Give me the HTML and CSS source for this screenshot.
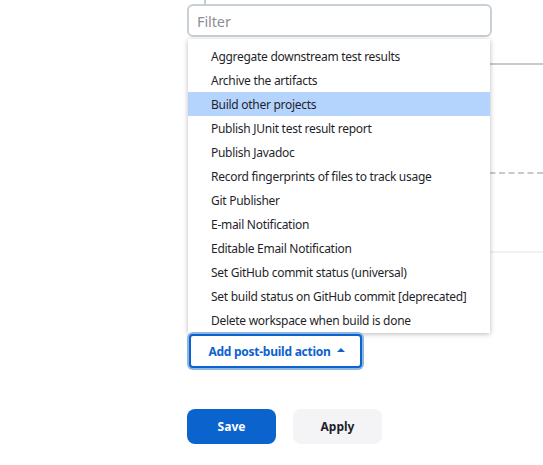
FILE: index.html
```html
<!DOCTYPE html>
<html>
<head>
<meta charset="utf-8">
<link rel="stylesheet" href="styles.css">
</head>
<body>
<div class="page">
  <div class="bg">
    <div class="vline"></div>
    <div class="hline solid" style="top:63px"></div>
    <div class="hline dashed" style="top:172px"></div>
    <div class="hline light" style="top:251px"></div>
  </div>
  <div class="col">
    <input class="filter" placeholder="Filter">
    <ul class="menu">
      <li>Aggregate downstream test results</li>
      <li>Archive the artifacts</li>
      <li class="active">Build other projects</li>
      <li>Publish JUnit test result report</li>
      <li>Publish Javadoc</li>
      <li>Record fingerprints of files to track usage</li>
      <li>Git Publisher</li>
      <li>E-mail Notification</li>
      <li>Editable Email Notification</li>
      <li>Set GitHub commit status (universal)</li>
      <li>Set build status on GitHub commit [deprecated]</li>
      <li>Delete workspace when build is done</li>
    </ul>
    <div class="addrow">
      <button class="add">Add post-build action <span class="caret"></span></button>
    </div>
    <div class="actions">
      <button class="save">Save</button>
      <button class="apply">Apply</button>
    </div>
  </div>
</div>
</body>
</html>
```
FILE: styles.css
```css
html, body { margin: 0; padding: 0; background: #fff; }
body { font-family: "Noto Sans", "Open Sans", sans-serif; color: #1f1f2b; }
.page { position: relative; width: 543px; height: 465px; overflow: hidden; }
.bg { position: absolute; inset: 0; }
.vline { position: absolute; left: 204px; top: 0; width: 2px; height: 6px; background: #c3ccd1; }
.hline { position: absolute; left: 480px; right: 0; }
.hline.solid { height: 2px; background: #c3cbd0; }
.hline.dashed { border-top: 2px dashed #c3cbd0; }
.hline.light { height: 2px; background: #f1f1f6; }
.col { position: relative; margin-left: 187px; width: 305px; padding-top: 4px; display: flex; flex-direction: column; }
.filter { box-sizing: border-box; width: 305px; height: 33px; border: 2px solid #c8d0d5; border-radius: 6px; padding: 0 8px; font-family: inherit; font-size: 14.5px; letter-spacing: -0.1px; color: #333; outline: none; background: #fff; }
.filter::placeholder { color: #8a8f96; }
.menu { list-style: none; margin: 2px 0 0 1px; padding: 5px 0 1px; width: 302px; background: #fff; box-shadow: 0 1px 5px rgba(0,0,0,0.28); font-size: 12px; letter-spacing: -0.28px; }
.menu li { height: 24px; line-height: 26px; padding-left: 23px; white-space: nowrap; }
.menu li.active { background: #b4d4fe; }
.addrow { margin-top: 1px; margin-left: 2px; }
.add { box-sizing: border-box; height: 34px; width: 173px; border: 2px solid #0b62d0; border-radius: 4px; box-shadow: 0 0 0 2px #8eb7dc; background: #fff; color: #0b62d0; font-family: inherit; font-weight: 700; font-size: 12px; letter-spacing: -0.25px; display: flex; align-items: center; justify-content: center; gap: 6px; padding: 0 0 0 2px; }
.caret { width: 0; height: 0; border-left: 4px solid transparent; border-right: 4px solid transparent; border-bottom: 4px solid #0b62d0; margin-top: -2px; }
.actions { display: flex; gap: 17px; margin-top: 41px; }
.actions button { box-sizing: border-box; width: 89px; height: 35px; border: 0; border-radius: 8px; font-family: inherit; font-weight: 700; font-size: 12px; }
.save { background: #0b63ce; color: #fff; }
.apply { background: #f4f4f7; color: #1f1f2b; }
```
